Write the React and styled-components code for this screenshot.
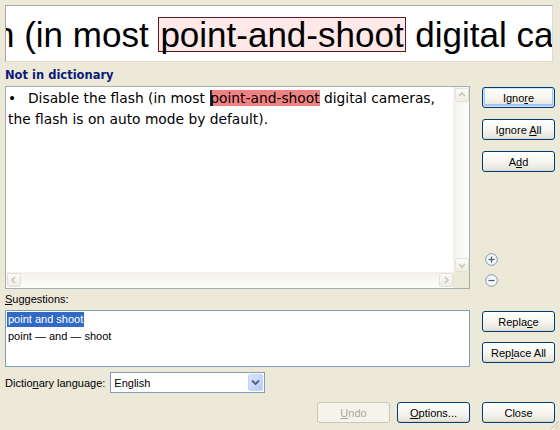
import React from 'react';
import styled, { createGlobalStyle, css } from 'styled-components';

const Global = createGlobalStyle`
	html, body {
		margin: 0;
		padding: 0;
		background: #ece9d8;
	}
`;

const ui = `'Liberation Sans', Arial, sans-serif`;

const Dialog = styled.div`
	position: relative;
	width: 560px;
	height: 430px;
	box-sizing: border-box;
	padding: 5px 5px 0 5px;
	background: #ece9d8;
	font-family: ${ui};
	font-size: 11px;
	color: #000;
	display: flex;
	flex-direction: column;
	overflow: hidden;
`;

const Magnifier = styled.div`
	width: 548px;
	height: 57px;
	box-sizing: border-box;
	background: #fff;
	border: 1px solid;
	border-color: #aca899 #dedcd2 #dedcd2 #aca899;
	overflow: hidden;
	white-space: nowrap;
	font-family: 'Liberation Sans', Arial, sans-serif;
	font-size: 35px;
	line-height: 35px;
	padding-top: 11px;
`;

const BigLine = styled.div`
	margin-left: -11px;
`;

const BigMark = styled.span`
	display: inline-block;
	line-height: 33px;
	background: #ffe8e8;
	border: 1px solid #5a1c1c;
	padding: 0 1px;
`;

const Heading = styled.div`
	height: 18px;
	margin: 4px 0 2px;
	font-family: 'DejaVu Sans', Verdana, sans-serif;
	font-weight: bold;
	font-size: 11.5px;
	line-height: 18px;
	color: #0a1a78;
`;

const Row = styled.div`
	display: flex;
	gap: 12px;
	height: ${p => p.$h}px;
`;

const TextBox = styled.div`
	width: 465px;
	box-sizing: border-box;
	border: 1px solid #a5acb2;
	background: #fff;
	display: grid;
	grid-template-columns: 1fr 16px;
	grid-template-rows: 1fr 16px;
`;

const Content = styled.div`
	padding: 1px 0 0 2px;
	font-family: 'DejaVu Sans', Verdana, sans-serif;
	font-size: 13.8px;
	line-height: 21px;
	color: #000;
`;

const Bullet = styled.span`
	display: inline-block;
	width: 20px;
`;

const Misspelled = styled.span`
	background: #f28282;
	box-shadow: inset 2px 0 0 #1d2b2b;
	margin-left: 1px;
`;

const ScrollV = styled.div`
	background: linear-gradient(90deg, #f3f1ea, #fdfdfa);
	display: flex;
	flex-direction: column;
	justify-content: space-between;
	padding: 1px 1px 0 2px;
`;

const ScrollH = styled.div`
	background: linear-gradient(180deg, #f3f1ea, #fdfdfa);
	display: flex;
	justify-content: space-between;
	padding: 0 0 0 1px;
	align-items: center;
`;

const Corner = styled.div`
	background: #ece9d8;
`;

const ScrollButton = styled.div`
	width: 14px;
	height: 14px;
	box-sizing: border-box;
	border: 1px solid #e4e2d8;
	border-radius: 2px;
	background: linear-gradient(180deg, #fbfbf8, #eeede6);
	display: flex;
	align-items: center;
	justify-content: center;
`;

const Side = styled.div`
	width: 73px;
	display: flex;
	flex-direction: column;
	gap: ${p => p.$gap}px;
	padding-top: 1px;
	padding-bottom: 2px;
`;

const Button = styled.div`
	width: 73px;
	height: 21px;
	box-sizing: border-box;
	border: 1px solid #003c74;
	border-radius: 3px;
	background: linear-gradient(180deg, #ffffff 0%, #f5f4ef 55%, #e8e6dc 90%, #d8d3c6 100%);
	display: flex;
	align-items: center;
	justify-content: center;
	font-family: ${ui};
	font-size: 11px;
	color: #000;
	white-space: pre;
	${p => p.$default && css`
		box-shadow: inset 0 0 0 1px #cee7ff, inset 0 -1px 0 2px #a9c4ee;
	`}
	${p => p.$disabled && css`
		border-color: #c9c7ba;
		background: #f5f4ea;
		color: #aca899;
	`}
`;

const Zooms = styled.div`
	margin-top: auto;
	margin-left: 3px;
	display: flex;
	flex-direction: column;
	gap: 8px;
`;

const Label = styled.div`
	height: 21px;
	line-height: 21px;
`;

const List = styled.div`
	width: 465px;
	box-sizing: border-box;
	border: 1px solid #7f9db9;
	background: #fff;
	padding: 1px 1px;
	font-family: ${ui};
	font-size: 11px;
`;

const Item = styled.div`
	display: table;
	height: 15px;
	line-height: 15px;
	padding: 0 1px;
	margin-bottom: 2px;
	${p => p.$selected && css`
		background: #316ac5;
		color: #fff;
	`}
`;

const LangRow = styled.div`
	display: flex;
	align-items: center;
	height: 21px;
	margin-top: 5px;
	gap: 5px;
`;

const Select = styled.div`
	width: 155px;
	height: 21px;
	box-sizing: border-box;
	border: 1px solid #7f9db9;
	background: #fff;
	display: flex;
	align-items: center;
	justify-content: space-between;
	padding: 1px 1px 1px 3px;
`;

const DropButton = styled.div`
	width: 15px;
	height: 17px;
	border-radius: 2px;
	background: linear-gradient(135deg, #dbe6fd, #b8cbf6);
	border: 1px solid #c3d3fb;
	box-sizing: border-box;
	display: flex;
	align-items: center;
	justify-content: center;
`;

const Footer = styled.div`
	display: flex;
	justify-content: flex-end;
	margin-top: 9px;
	gap: 7px;
	& > :last-child {
		margin-left: 5px;
	}
`;

const Grip = styled.svg`
	position: absolute;
	right: 0;
	bottom: 0;
`;

const Arrow = ({ dir }) => {
	const d = {
		up: 'M3 7 L6 4 L9 7',
		down: 'M3 5 L6 8 L9 5',
		left: 'M7 3 L4 6 L7 9',
		right: 'M5 3 L8 6 L5 9',
	}[dir];
	return (
		<svg width="12" height="12" viewBox="0 0 12 12">
			<path d={d} fill="none" stroke="#c9c7bc" strokeWidth="1.6" />
		</svg>
	);
};

const ZoomIcon = ({ plus }) => (
	<svg width="13" height="13" viewBox="0 0 13 13">
		<circle cx="6.5" cy="6.5" r="5.8" fill="#f6f6f2" stroke="#8597b8" strokeWidth="1" />
		<path d="M3.5 6.5 H9.5" stroke="#3f5a96" strokeWidth="1.2" />
		{plus && <path d="M6.5 3.5 V9.5" stroke="#3f5a96" strokeWidth="1.2" />}
	</svg>
);

export default function App() {
	return (
		<>
			<Global />
			<Dialog>
				<Magnifier>
					<BigLine>
						n (in most <BigMark>point-and-shoot</BigMark> digital ca
					</BigLine>
				</Magnifier>

				<Heading>Not in dictionary</Heading>

				<Row $h={203}>
					<TextBox>
						<Content>
							<Bullet>•</Bullet>Disable the flash (in most <Misspelled>point-and-shoot</Misspelled> digital cameras, the flash is on auto mode by default).
						</Content>
						<ScrollV>
							<ScrollButton><Arrow dir="up" /></ScrollButton>
							<ScrollButton><Arrow dir="down" /></ScrollButton>
						</ScrollV>
						<ScrollH>
							<ScrollButton><Arrow dir="left" /></ScrollButton>
							<ScrollButton><Arrow dir="right" /></ScrollButton>
						</ScrollH>
						<Corner />
					</TextBox>
					<Side $gap={11}>
						<Button $default><span>Igno<u>r</u>e</span></Button>
						<Button><span>Ignore <u>A</u>ll</span></Button>
						<Button><span>A<u>d</u>d</span></Button>
						<Zooms>
							<ZoomIcon plus />
							<ZoomIcon />
						</Zooms>
					</Side>
				</Row>

				<Label><u>S</u>uggestions:</Label>

				<Row $h={57}>
					<List>
						<Item $selected>point and shoot</Item>
						<Item>point — and — shoot</Item>
					</List>
					<Side $gap={10}>
						<Button><span>Repla<u>c</u>e</span></Button>
						<Button><span>Rep<u>l</u>ace All</span></Button>
					</Side>
				</Row>

				<LangRow>
					<span>Dictio<u>n</u>ary language:</span>
					<Select>
						<span>English</span>
						<DropButton>
							<svg width="9" height="7" viewBox="0 0 9 7">
								<path d="M1 1.5 L4.5 5 L8 1.5" fill="none" stroke="#4d6185" strokeWidth="1.8" />
							</svg>
						</DropButton>
					</Select>
				</LangRow>

				<Footer>
					<Button $disabled><span><u>U</u>ndo</span></Button>
					<Button><span><u>O</u>ptions...</span></Button>
					<Button><span>Close</span></Button>
				</Footer>

				<Grip width="12" height="12" viewBox="0 0 12 12">
					<path d="M11 3 L3 11 M11 7 L7 11 M11 10 L10 11" stroke="#c5c1b2" strokeWidth="1" />
				</Grip>
			</Dialog>
		</>
	);
}
